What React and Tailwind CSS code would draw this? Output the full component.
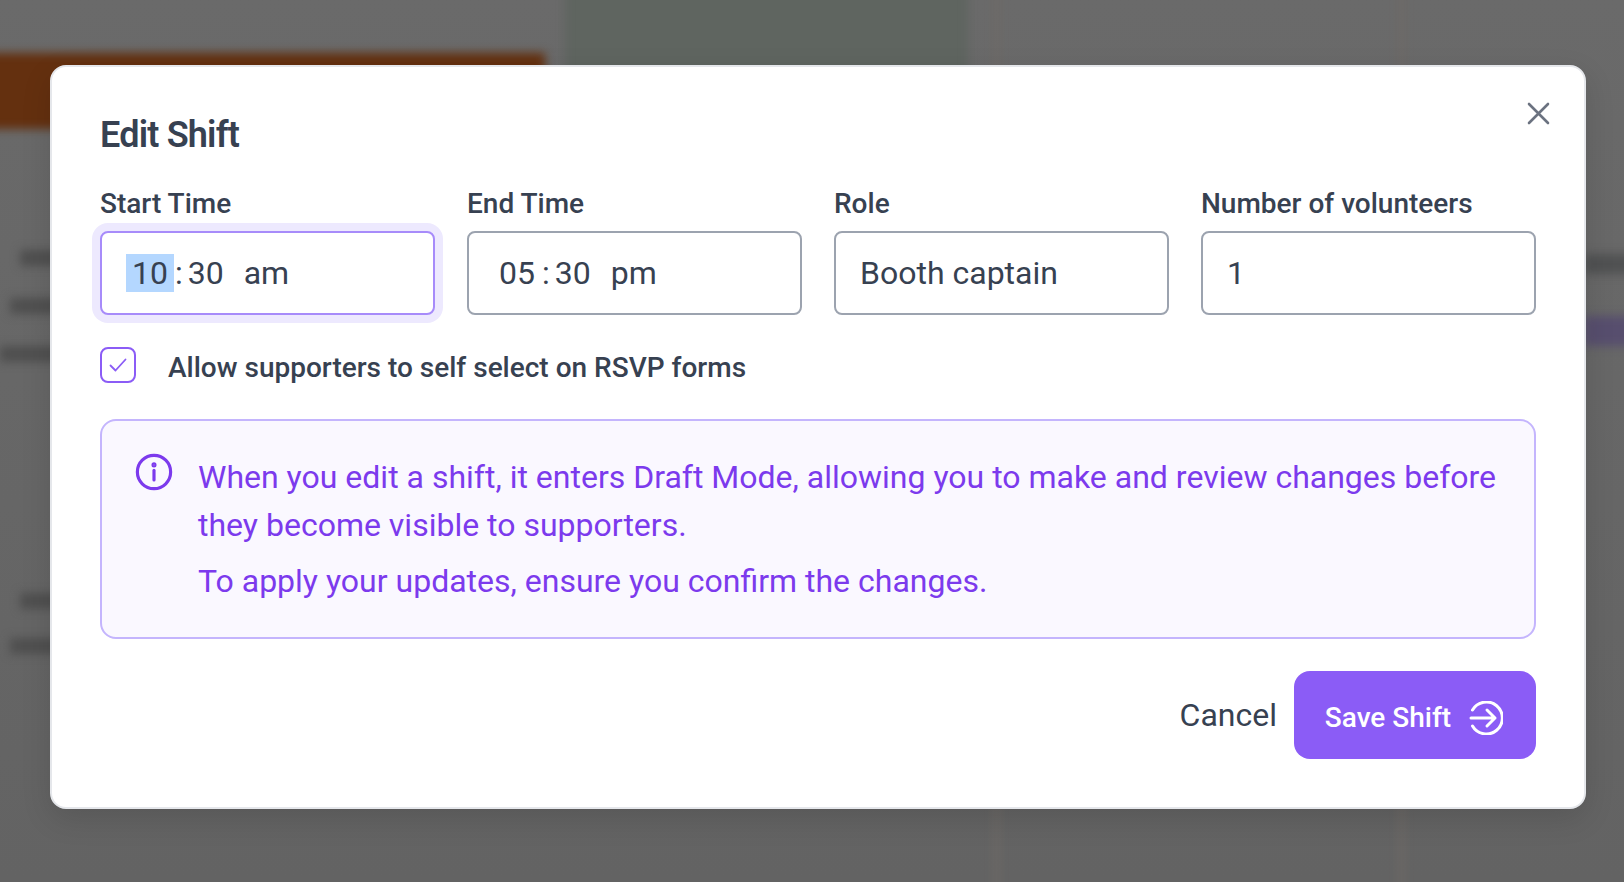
const F = "font-['Roboto',sans-serif]";

function Field({ label, children, focused }) {
  return (
    <div className="flex flex-col">
      <label className="text-[28px] leading-[32px] font-medium text-[#374151] mb-[11px] whitespace-nowrap">{label}</label>
      <div className={"h-[84px] rounded-[8px] border-2 bg-white flex items-center text-[32px] text-[#374151] whitespace-pre " + (focused ? "border-[#a78bfa] shadow-[0_0_0_8px_#ede9fe]" : "border-[#9ca3af]")}>
        {children}
      </div>
    </div>
  );
}

function TextBlob({ indent, mt }) {
  return <div className={"h-[16px] w-[400px] bg-[#4f4f4f] " + indent + " " + mt} />;
}

function Backdrop() {
  return (
    <div className="h-[882px] w-full overflow-hidden bg-linear-to-b from-[#6a6a6a] to-[#636363]">
      <div className="-m-[20px] w-[1664px] h-[922px] blur-[5px] flex">
        <div className="w-[565px] shrink-0 flex flex-col pt-[73px]">
          <div className="h-[76px] shrink-0 bg-[#64300f]" />
          <TextBlob indent="ml-[40px]" mt="mt-[121px]" />
          <TextBlob indent="ml-[30px]" mt="mt-[32px]" />
          <TextBlob indent="ml-[20px]" mt="mt-[32px]" />
          <TextBlob indent="ml-[40px]" mt="mt-[231px]" />
          <TextBlob indent="ml-[30px]" mt="mt-[29px]" />
        </div>
        <div className="ml-[20px] w-[403px] h-[120px] shrink-0 bg-[#5f6560]" />
        <div className="ml-[26px] w-[5px] h-full shrink-0 bg-[#6f6a66]" />
        <div className="ml-[400px] w-[5px] h-full shrink-0 bg-[#6f6a66]" />
        <div className="flex-1 flex flex-col pt-[274px] items-end">
          <div className="h-[20px] w-[60px] bg-[#505152]" />
          <div className="h-[30px] w-[60px] mt-[42px] bg-[#574e6e]" />
        </div>
      </div>
    </div>
  );
}

export default function App() {
  return (
    <div className={F + " relative h-[882px] w-full overflow-hidden"}>
      <Backdrop />
      <div className="absolute inset-0 pl-[50px] pt-[65px]">
        <div className="relative w-[1536px] h-[744px] rounded-[16px] bg-white border-2 border-[#e5e7eb] shadow-[0_10px_30px_rgba(0,0,0,0.12)] p-12 flex flex-col">
          <button className="absolute right-[34px] top-[34px] text-[#6b7280]">
            <svg width="24" height="24" viewBox="0 0 24 24" fill="none" stroke="currentColor" strokeWidth="2.6" strokeLinecap="round"><path d="M3 3 22 22M22 3 3 22" /></svg>
          </button>
          <h2 className="text-[36px] leading-[40px] font-semibold text-[#374151] tracking-[-0.8px] mb-[33px]">Edit Shift</h2>
          <div className="grid grid-cols-4 gap-8">
            <Field label="Start Time" focused>
              <span className="pl-[24px] flex items-center">
                <span className="bg-[#b4d7ff] leading-[38px] px-[6px]">10</span>
                <span className="pl-[1px] pr-[5px]">:</span>
                <span>30</span>
                <span className="ml-[20px]">am</span>
              </span>
            </Field>
            <Field label="End Time">
              <span className="pl-[30px] flex items-center">
                <span>05</span>
                <span className="pl-[7px] pr-[5px]">:</span>
                <span>30</span>
                <span className="ml-[20px]">pm</span>
              </span>
            </Field>
            <Field label="Role"><span className="pl-[24px]">Booth captain</span></Field>
            <Field label="Number of volunteers"><span className="pl-[24px]">1</span></Field>
          </div>
          <div className="flex items-center mt-[32px] h-[36px]">
            <span className="w-[36px] h-[36px] shrink-0 rounded-[8px] border-2 border-[#8b5cf6] flex items-center justify-center mr-[32px]">
              <svg width="20" height="20" viewBox="0 0 20 20" fill="none" stroke="#8b5cf6" strokeWidth="1.8" strokeLinecap="round" strokeLinejoin="round"><path d="M2.5 10.5 7.5 15.5 17.5 4.5" /></svg>
            </span>
            <span className="text-[28px] font-medium text-[#374151] pt-[6px]">Allow supporters to self select on RSVP forms</span>
          </div>
          <div className="mt-[36px] h-[220px] rounded-[16px] border-2 border-[#c4b5fd] bg-[#faf8ff] pl-[33px] pr-[32px] pt-[32px] flex gap-[25px] text-[#7c3aed] text-[32px] leading-[48px]">
            <svg className="shrink-0" width="38" height="38" viewBox="0 0 24 24" fill="none" stroke="currentColor" strokeWidth="2" strokeLinecap="round"><circle cx="12" cy="12" r="10.5" /><path d="M12 11v6" /><circle cx="12" cy="7.5" r="0.6" fill="currentColor" /></svg>
            <div className="flex flex-col gap-[8px]">
              <p>When you edit a shift, it enters Draft Mode, allowing you to make and review changes before they become visible to supporters.</p>
              <p>To apply your updates, ensure you confirm the changes.</p>
            </div>
          </div>
          <div className="flex justify-end items-center gap-[17px] mt-[32px]">
            <button className="text-[32px] text-[#374151]">Cancel</button>
            <button className="w-[242px] h-[88px] rounded-[16px] bg-[#8b5cf6] text-white text-[28px] font-medium flex items-center justify-center gap-[18px] pt-[5px] pr-[2px]">
              Save Shift
              <svg width="34" height="34" viewBox="0 0 34 34" fill="none" stroke="currentColor" strokeWidth="3" strokeLinecap="round" strokeLinejoin="round"><path d="M3.5 9A16 16 0 1 1 3.5 25" /><path d="M2 17H26M18 9l8 8-8 8" /></svg>
            </button>
          </div>
        </div>
      </div>
    </div>
  );
}
